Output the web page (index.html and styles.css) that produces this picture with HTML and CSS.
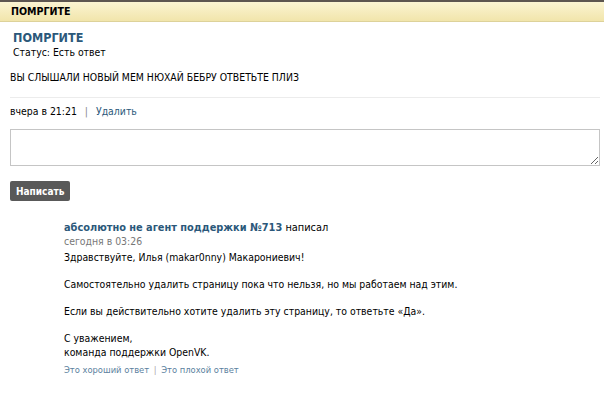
FILE: index.html
```html
<!DOCTYPE html>
<html lang="ru">
<head>
    <meta charset="UTF-8">
    <title>ПОМРГИТЕ</title>
    <link rel="stylesheet" href="styles.css">
</head>
<body>
    <div class="page">
        <div class="bar">ПОМРГИТЕ</div>
        <div class="ticket">
            <div class="ticket-head">
                <div class="ticket-title">ПОМРГИТЕ</div>
                <div class="ticket-status">Статус: Есть ответ</div>
            </div>
            <div class="ticket-text">ВЫ СЛЫШАЛИ НОВЫЙ МЕМ НЮХАЙ БЕБРУ ОТВЕТЬТЕ ПЛИЗ</div>
            <div class="ticket-meta">вчера в 21:21 <span class="sep">|</span> <a href="#">Удалить</a></div>
            <textarea class="reply-box"></textarea>
            <button class="btn">Написать</button>
            <div class="comment">
                <div class="comment-author"><a href="#">абсолютно не агент поддержки №713</a> написал</div>
                <div class="comment-date">сегодня в 03:26</div>
                <div class="comment-text">Здравствуйте, Илья (makar0nny) Макарониевич!<br><br>Самостоятельно удалить страницу пока что нельзя, но мы работаем над этим.<br><br>Если вы действительно хотите удалить эту страницу, то ответьте «Да».<br><br>С уважением,<br>команда поддержки OpenVK.</div>
                <div class="comment-rate"><a href="#">Это хороший ответ</a> <span class="sep">|</span> <a href="#">Это плохой ответ</a></div>
            </div>
        </div>
    </div>
</body>
</html>
```

FILE: styles.css
```css
* { margin: 0; padding: 0; box-sizing: border-box; }
body {
    font-family: "DejaVu Sans Condensed", "Liberation Sans", sans-serif;
    font-size: 10.4px;
    color: #000;
    background: #fff;
}
a { color: #2b587a; text-decoration: none; }
.page { border-bottom: 1px solid #c8c8c8; padding-bottom: 23px; }
.bar {
    border-top: 2px solid #5d5650;
    border-bottom: 1px solid #ddd29a;
    background: linear-gradient(#fbf4d2, #f1e5ab);
    height: 22px;
    line-height: 19px;
    padding: 0 11px;
    font-weight: bold;
    font-size: 10.6px;
}
.ticket { padding: 0 4px 0 10px; }
.ticket-head { padding: 8px 3px 0; }
.ticket-title { color: #2b587a; font-weight: bold; font-size: 12.5px; line-height: 16px; }
.ticket-status { line-height: 13px; }
.ticket-text {
    margin-top: 11px;
    line-height: 14px;
    padding-bottom: 13px;
    border-bottom: 1px solid #ececec;
}
.ticket-meta { margin-top: 6px; line-height: 14px; }
.sep { color: #888; margin: 0 5px; }
.reply-box {
    display: block;
    margin-top: 11px;
    width: 100%;
    height: 37px;
    border: 1px solid #c5c5c5;
    resize: vertical;
}
.btn {
    display: block;
    margin-top: 15px;
    height: 20px;
    padding: 0 6px;
    background: #595959;
    color: #fff;
    border: none;
    border-radius: 2px;
    font-family: inherit;
    font-size: 10px;
    font-weight: bold;
}
.comment { margin: 20px 0 0 54px; }
.comment-author { line-height: 14px; font-size: 10.9px; }
.comment-author a { font-weight: bold; }
.comment-date { color: #777; line-height: 13px; }
.comment-text { margin-top: 3px; line-height: 13.5px; }
.comment-rate { margin-top: 5px; line-height: 12px; font-size: 9.3px; }
.comment-rate a { color: #5b7f9e; }
.comment-rate .sep { margin: 0 2px; color: #aaa; }
```
